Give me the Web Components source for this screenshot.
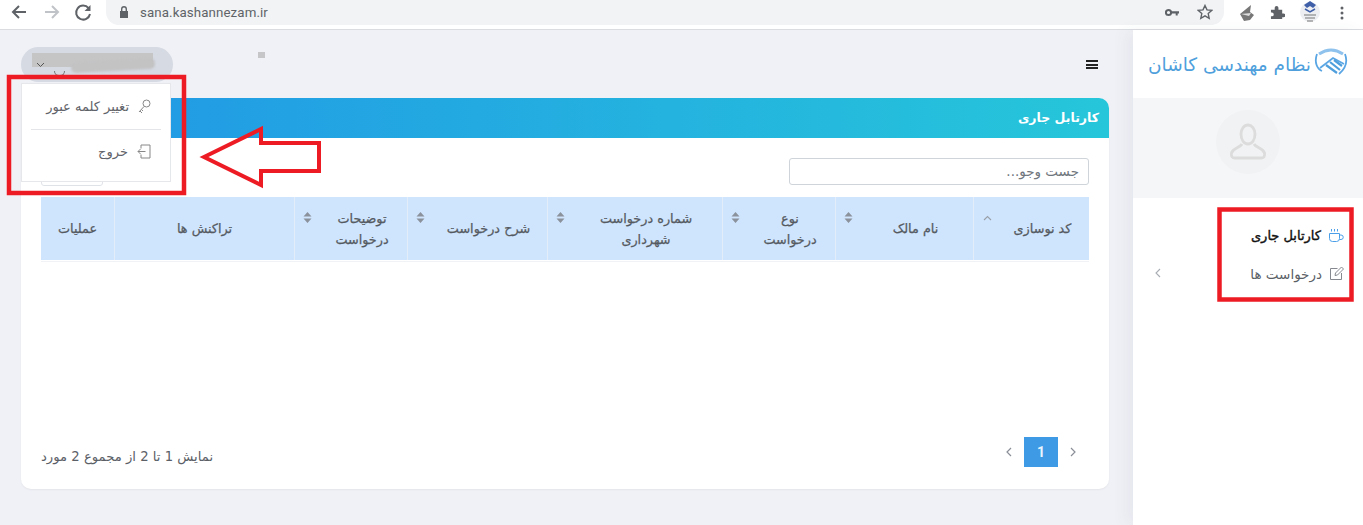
<!DOCTYPE html>
<html lang="fa"><head><meta charset="utf-8"><title>کارتابل</title>
<style>
html,body{margin:0;padding:0;height:525px;overflow:hidden;background:#f0f1f6;font-family:"DejaVu Sans",sans-serif}
app-root{display:block}
</style></head><body>
<app-root></app-root>
<script>
const def=(n,html)=>customElements.define(n,class extends HTMLElement{constructor(){super();this.attachShadow({mode:'open'}).innerHTML=html;}});

def('browser-bar',`<style>
:host{display:flex;align-items:flex-start;height:29px;background:#fff;border-bottom:1px solid #dadce0}
svg{display:block;flex:none}
.nav{display:flex;padding-top:1px}
.nav svg{width:32px;height:22px}
.url{margin-left:7px;width:1118px;height:25px;background:#f1f3f4;border-radius:0 0 13px 13px;display:flex;align-items:center;font:13.3px Roboto,sans-serif;color:#5f6368;letter-spacing:.1px;box-sizing:border-box;padding:0 11px 1px 12px}
.url span{flex:1;margin-left:10px}
.ext{display:flex;align-items:center;height:25px}
</style>
<div class="nav">
<svg viewBox="0 0 32 22" style="margin-left:3px"><path d="M23 11H10M16 5l-6 6 6 6" fill="none" stroke="#5f6368" stroke-width="2"/></svg>
<svg viewBox="0 0 32 22"><path d="M10 11h13M17 5l6 6-6 6" fill="none" stroke="#c0c3c7" stroke-width="2"/></svg>
<svg viewBox="0 0 32 22"><path d="M21.600 7.200A7 7 0 1 0 23 13" fill="none" stroke="#5f6368" stroke-width="2"/><path d="M23.500 4v6h-6z" fill="#5f6368"/></svg>
</div>
<div class="url">
<svg width="12" height="14" viewBox="0 0 12 14"><path d="M2 6h8v7H2z" fill="#5f6368"/><path d="M3.700 6V4a2.300 2.300 0 0 1 4.600 0v2" fill="none" stroke="#5f6368" stroke-width="1.400"/></svg>
<span>sana.kashannezam.ir</span>
<svg width="14" height="9" viewBox="0 0 14 9" style="margin-right:18px"><circle cx="3.500" cy="4.500" r="2.600" fill="none" stroke="#5f6368" stroke-width="2"/><path d="M6 3.200h8v2.300h-1.300V7.500h-2V5.500H6z" fill="#5f6368"/></svg>
<svg width="16" height="16" viewBox="0 0 16 16"><path d="M8 1.500l2 4.400 4.700.5-3.500 3.200 1 4.700L8 11.900l-4.200 2.400 1-4.700L1.300 6.400 6 5.900z" fill="none" stroke="#5f6368" stroke-width="1.400"/></svg>
</div>
<div class="ext">
<svg width="18" height="20" viewBox="0 0 18 20" style="margin-left:14px"><path d="M2 11L13 2l-1 7 4 3-4 5-6 1z" fill="#777"/><path d="M3 11l10-1-2 3z" fill="#ddd"/></svg>
<svg width="15" height="15" viewBox="0 0 16 16" style="margin-left:14px"><path d="M1 5h4V3a2 2 0 0 1 4 0v2h4v4h1.500a2 2 0 0 1 0 4H13v2H1v-3h1a2 2 0 0 0 0-4H1z" fill="#5f6368"/></svg>
<svg width="20" height="24" viewBox="0 0 20 24" style="margin:-2px 0 0 15px"><circle cx="10" cy="12" r="10" fill="#eceef2"/><path d="M4 5l6-4 6 4-3 3-3-2-3 2z" fill="#3f5fa8"/><path d="M5 9l5 3 5-3" fill="none" stroke="#3f5fa8" stroke-width="1.500"/><path d="M4 15h12M5 18h10M7 21h6" stroke="#777" stroke-width="1"/></svg>
<svg width="4" height="14" viewBox="0 0 4 14" style="margin-left:20px"><circle cx="2" cy="2" r="1.500" fill="#5f6368"/><circle cx="2" cy="7" r="1.500" fill="#5f6368"/><circle cx="2" cy="12" r="1.500" fill="#5f6368"/></svg>
</div>`);

def('top-bar',`<style>
:host{display:flex;align-items:flex-start;justify-content:space-between;height:68px;box-sizing:border-box;padding:17px 35px 0 21px}
.pill{width:152px;height:35px;border-radius:18px;background:#d5dae3;position:relative;overflow:hidden}
.smear{position:absolute;left:11px;top:6px;width:121px;height:14px;background:#c5c5c6}
.smear2{position:absolute;left:50px;top:13px;width:84px;height:11px;border-radius:5px;background:#c3c3c4;filter:blur(1px);transform:rotate(-3deg)}
.ch{position:absolute;left:15px;top:15px}
.o{position:absolute;left:33px;top:24px;width:9px;height:4px;border:1px solid #777;border-top:0;border-radius:0 0 6px 6px}
.sq{width:7px;height:6px;background:#c6c6c8;margin:5px 0 0 85px}
.grow{flex:1}
.burger{margin-top:13px;width:12px;height:9px;border-top:2px solid #222;border-bottom:2px solid #222;position:relative;box-sizing:border-box}
.burger:after{content:"";position:absolute;left:0;right:0;top:2px;height:1.500px;background:#222}
</style>
<div class="pill"><div class="smear"></div><div class="smear2"></div><div class="o"></div><svg class="ch" width="9" height="6" viewBox="0 0 9 6"><path d="M1 1l3.500 3.500L8 1" fill="none" stroke="#555" stroke-width="1"/></svg></div>
<div class="sq"></div><div class="grow"></div><div class="burger"></div>`);

def('sort-mark',`<style>:host{display:block;flex:none;width:9px;height:11px}svg{display:block}</style>
<svg width="9" height="11" viewBox="0 0 9 11"><path d="M4.500 0L8.500 4.500H.5zM4.500 11L.5 6.500h8z" fill="#8b929b"/></svg>`);
def('sort-up',`<style>:host{display:block;flex:none;width:9px;height:6px}svg{display:block}</style>
<svg width="9" height="6" viewBox="0 0 9 6"><path d="M1 5l3.500-3.500L8 5" fill="none" stroke="#9aa0a8" stroke-width="1.100"/></svg>`);

def('data-table',`<style>
:host{display:block;font:400 12.8px/21px "DejaVu Sans",sans-serif;color:#555a61;-webkit-text-stroke:.25px #555a61}
.t{display:grid;grid-template-columns:116px 138px 113px 175px 140px 113px 180px 1fr;direction:rtl;height:64px;border-bottom:1px solid #f0f2f5}
.c{background:#cfe5fe;border-left:1px solid #e2edf9;height:63px;display:flex;align-items:center;justify-content:center;text-align:center;position:relative;box-sizing:border-box;padding:0 10px 0 32px}
.c.p{padding:0 8px}
.c:last-child{border-left:0}
.m{position:absolute;left:8px;top:15px}
</style>
<div class="t">
<div class="c">کد نوسازی<sort-up class="m" style="left:9px;top:18px"></sort-up></div>
<div class="c">نام مالک<sort-mark class="m"></sort-mark></div>
<div class="c">نوع<br>درخواست<sort-mark class="m"></sort-mark></div>
<div class="c">شماره درخواست<br>شهرداری<sort-mark class="m"></sort-mark></div>
<div class="c">شرح درخواست<sort-mark class="m"></sort-mark></div>
<div class="c">توضیحات<br>درخواست<sort-mark class="m"></sort-mark></div>
<div class="c p">تراکنش ها</div>
<div class="c p">عملیات</div>
</div>`);

def('page-nav',`<style>
:host{display:flex;align-items:center;height:30px}
.b{width:34px;height:30px;background:#3f9ae5;color:#e8f4ff;font:700 14px/30px Roboto,sans-serif;text-align:center;margin:0 12px}
svg{display:block}
</style>
<svg width="6" height="10" viewBox="0 0 6 10"><path d="M5 1L1 5l4 4" fill="none" stroke="#8a8f97" stroke-width="1.200"/></svg>
<div class="b">1</div>
<svg width="6" height="10" viewBox="0 0 6 10"><path d="M1 1l4 4-4 4" fill="none" stroke="#8a8f97" stroke-width="1.200"/></svg>`);

def('work-card',`<style>
:host{display:flex;flex-direction:column;width:1088px;height:391px;margin-left:21px;background:#fff;border-radius:10px;box-shadow:0 1px 2px rgba(0,0,0,.05)}
.h{height:40px;flex:none;border-radius:10px 10px 0 0;background:linear-gradient(90deg,#2196e6,#26c6da);color:#fff;font:700 12.5px/39px "DejaVu Sans",sans-serif;direction:rtl;padding-right:10px}
.b{flex:1;display:flex;flex-direction:column;padding:20px 20px 22px}
.tools{display:flex;justify-content:space-between;align-items:flex-start;height:27px;margin-bottom:12px}
.sel{width:62px;height:28px;border:1px solid #dfe3e8;border-radius:3px;box-sizing:border-box}
.in{width:300px;height:27px;box-sizing:border-box;border:1px solid #ced4da;border-radius:3px;direction:rtl;padding:0 9px;font:13.5px/25px "DejaVu Sans",sans-serif;color:#70767d}
.f{margin-top:auto;display:flex;justify-content:space-between;align-items:center;height:30px;color:#5b6067}
.info{font:13.200px "DejaVu Sans",sans-serif;direction:rtl;margin-top:8px}
page-nav{margin-right:13px;margin-top:-1px}
</style>
<div class="h">کارتابل جاری</div>
<div class="b">
<div class="tools"><div class="sel"></div><div class="in">جست وجو...</div></div>
<data-table></data-table>
<div class="f"><div class="info">نمایش 1 تا 2 از مجموع 2 مورد</div><page-nav></page-nav></div>
</div>`);

def('side-bar',`<style>
:host{display:block;width:230px;background:#fff;height:495px;box-shadow:-8px 0 14px rgba(60,70,110,.05);flex:none}
.logo{height:68px;display:flex;align-items:center;direction:rtl;padding-right:15px;color:#4f9fdc;font:18.500px "DejaVu Sans",sans-serif;gap:3px;box-sizing:border-box}
.logo svg{flex:none;margin-bottom:4px}
.user{height:100px;background:#f5f6f8;display:flex;align-items:center;justify-content:center;padding-bottom:12px;box-sizing:border-box}
.av{width:64px;height:64px;border-radius:50%;background:#f1f2f3;display:flex;align-items:center;justify-content:center}
nav{direction:rtl;padding:24px 19px 0 0;font:13.500px "DejaVu Sans",sans-serif}
.i{display:flex;align-items:center;gap:7px;height:39px;color:#5a5f66;position:relative}
.i.on{color:#111;-webkit-text-stroke:.4px #111;height:26px;font-size:13px}
.i.on + .i{margin-top:6px}
.chev{position:absolute;left:22px;top:14px}
</style>
<div class="logo">
<svg width="34" height="32" viewBox="0 0 34 32" fill="none"><path d="M5 8Q17 0 29 8" stroke="#8fc2ec" stroke-width="3"/><path d="M3 8C0 16 3 23 8 25M31 8C34 16 31 23 25 28" stroke="#5aa6e4" stroke-width="1.800"/><path d="M6 22L19 12L30 18" stroke="#5aa6e4" stroke-width="1.800"/><path d="M12 19l11 8M16 16l10 8M20 14l8 6" stroke="#4f9fdc" stroke-width="2.200"/></svg>
<span>نظام مهندسی کاشان</span>
</div>
<div class="user"><div class="av"><svg width="42" height="42" viewBox="0 0 42 42" fill="none" stroke="#dcdcdc" stroke-width="2.800"><path d="M14 13a7 9 0 0 1 14 0c0 6-3 10-7 10s-7-4-7-10z"/><path d="M15 23c-2 4-9 4-10.500 9-.5 3 .5 5 3 5h27c2.500 0 3.500-2 3-5-1.500-5-8.500-5-10.500-9"/></svg></div></div>
<nav>
<div class="i on"><svg width="16" height="15" viewBox="0 0 16 15" fill="none" stroke="#4a9fe8" stroke-width="1" style="-webkit-text-stroke:0"><path d="M1.500 5.500h10v5a3 3 0 0 1-3 3h-4a3 3 0 0 1-3-3zM11.500 7h1.500a1.800 1.800 0 0 1 0 4.500h-1.600M3.500 1v2.500M6.500 1v2.500M9.500 1v2.500"/></svg><span>کارتابل جاری</span></div>
<div class="i"><svg width="15" height="15" viewBox="0 0 15 15" fill="none" stroke="#85898f" stroke-width="1"><path d="M12.500 7v6.500h-11v-11h7M6 9.500l.5-2.500 6-6 2 2-6 6z"/></svg><span>درخواست ها</span><svg class="chev" width="6" height="10" viewBox="0 0 6 10"><path d="M5 1L1 5l4 4" fill="none" stroke="#a8adb3" stroke-width="1.100"/></svg></div>
</nav>`);

def('user-menu',`<style>
:host{position:absolute;left:21px;top:83px;width:150px;height:99px;background:#fff;border:1px solid #e6e7ea;box-sizing:border-box;direction:rtl;color:#5f6369;font:13px "DejaVu Sans",sans-serif;padding:0 19px}
.i{display:flex;align-items:center;gap:9px;height:45px}
.i + hr + .i{height:42px}
hr{margin:0 -10px;border:0;border-top:1px solid #e4e5e8}
</style>
<div class="i"><svg width="13" height="16" viewBox="0 0 13 16" fill="none" stroke="#888" stroke-width="1"><circle cx="8.500" cy="4.500" r="3.500"/><path d="M6 7.500L1 13M2 12l2 2M3.500 10.500l1.500 1.500"/></svg><span>تغییر کلمه عبور</span></div>
<hr>
<div class="i"><svg width="14" height="15" viewBox="0 0 14 15" fill="none" stroke="#888" stroke-width="1"><path d="M4 4.500V1h9v13H4v-3.500M8.500 7.500H1M3.500 5L1 7.500 3.500 10"/></svg><span>خروج</span></div>`);

def('red-marks',`<style>:host{position:absolute;left:0;top:0;width:1363px;height:525px;pointer-events:none}svg{display:block}</style>
<svg width="1363" height="525" viewBox="0 0 1363 525" fill="none" stroke="#ed1c24" stroke-width="4.500">
<rect x="9" y="77" width="175" height="116"/>
<rect x="1219.500" y="209.500" width="132" height="90"/>
<path d="M204 157L261 129V143H319V171H261V185Z" stroke-width="4"/>
</svg>`);

def('app-root',`<style>
:host{display:block;position:relative;width:1363px;height:525px;overflow:hidden}
.w{display:flex;align-items:flex-start;height:495px}
.m{flex:1;min-width:0}
</style>
<browser-bar></browser-bar>
<div class="w"><div class="m"><top-bar></top-bar><work-card></work-card></div><side-bar></side-bar></div>
<user-menu></user-menu>
<red-marks></red-marks>`);
</script>
</body></html>
